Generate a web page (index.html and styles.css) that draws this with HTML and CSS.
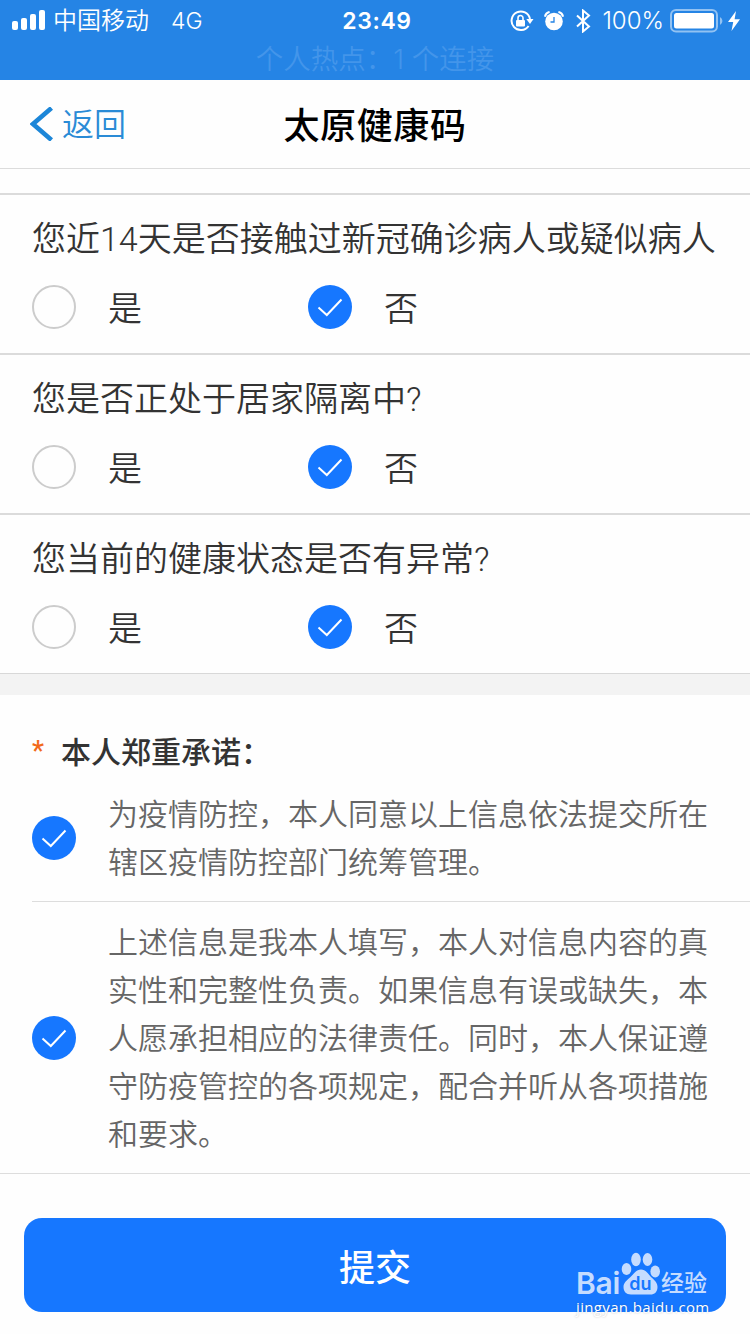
FILE: index.html
```
<!DOCTYPE html>
<html lang="zh-CN">
<head>
    <meta charset="UTF-8">
    <meta name="viewport" content="width=device-width, initial-scale=1.0">
    <title>太原健康码</title>
    <link rel="stylesheet" href="styles.css">
</head>
<body>
    <svg class="defs" width="0" height="0">
        <symbol id="tick" viewBox="0 0 44 44">
            <circle cx="22" cy="22" r="22" fill="#1677ff"/>
            <path d="M10.5 22.5l8.3 7.5L33.5 14.5" fill="none" stroke="#fff" stroke-width="2"/>
        </symbol>
    </svg>

    <div class="status-bar">
        <div class="status-row">
            <div class="status-left">
                <svg class="signal" width="34" height="22" viewBox="0 0 34 22" fill="#fff">
                    <rect x="0" y="11" width="6" height="9" rx="2"/>
                    <rect x="9" y="8" width="6" height="12" rx="2"/>
                    <rect x="18" y="4" width="6" height="16" rx="2"/>
                    <rect x="27" y="0" width="6" height="20" rx="2"/>
                </svg>
                <span class="carrier">中国移动</span>
                <span class="network">4G</span>
            </div>
            <div class="clock">23:49</div>
            <div class="status-right">
                <svg class="lock" width="24" height="22" viewBox="0 0 24 22" fill="none" stroke="#fff">
                    <path d="M18.6 16A9.3 9.3 0 1 1 20 9" stroke-width="2"/>
                    <path d="M16.3 9h7.2L20 14z" fill="#fff" stroke="none"/>
                    <rect x="6" y="10" width="9" height="6.5" rx="1" fill="#fff" stroke="none"/>
                    <path d="M8 10V8a2.5 2.5 0 0 1 5 0v2" stroke-width="1.6"/>
                </svg>
                <svg class="alarm" width="20" height="20" viewBox="0 0 20 20">
                    <circle cx="10" cy="10.5" r="8.8" fill="#fff"/>
                    <path d="M1 5.8A6 6 0 0 1 5.6 1M19 5.8A6 6 0 0 0 14.4 1" fill="none" stroke="#fff" stroke-width="2.2"/>
                    <path d="M10 6v5H6.5" fill="none" stroke="#2584e5" stroke-width="1.3"/>
                </svg>
                <svg class="bluetooth" width="15" height="24" viewBox="0 0 15 24" fill="none" stroke="#fff" stroke-width="2">
                    <path d="M1 6.5l12 11-6 5V1.5l6 5-12 11"/>
                </svg>
                <span class="percent">100%</span>
                <svg class="battery" width="53" height="24" viewBox="0 0 53 24">
                    <rect x="1" y="1" width="46" height="21.5" rx="5" fill="none" stroke="#fff" stroke-opacity=".5" stroke-width="2"/>
                    <rect x="4" y="4" width="40" height="15.5" rx="2.5" fill="#fff"/>
                    <path d="M50 8a4.5 4.5 0 0 1 0 8z" fill="#fff" fill-opacity=".5"/>
                </svg>
                <svg class="bolt" width="12" height="20" viewBox="0 0 12 20" fill="#fff">
                    <path d="M8 0L0 11h5.2L3.5 20 12 8.2H6.6z"/>
                </svg>
            </div>
        </div>
        <div class="hotspot">个人热点：1 个连接</div>
    </div>

    <div class="nav">
        <a class="back">
            <svg width="24" height="34" viewBox="0 0 24 34">
                <path d="M21.5 1L3 17l18.5 16" fill="none" stroke="#1c86d8" stroke-width="4.6"/>
            </svg>
            <span>返回</span>
        </a>
        <h1>太原健康码</h1>
    </div>

    <div class="questions">
        <div class="question">
            <p>您近14天是否接触过新冠确诊病人或疑似病人</p>
            <div class="options">
                <label class="option"><span class="radio"></span><span class="label">是</span></label>
                <label class="option"><svg class="check"><use href="#tick"/></svg><span class="label">否</span></label>
            </div>
        </div>
        <div class="question">
            <p>您是否正处于居家隔离中?</p>
            <div class="options">
                <label class="option"><span class="radio"></span><span class="label">是</span></label>
                <label class="option"><svg class="check"><use href="#tick"/></svg><span class="label">否</span></label>
            </div>
        </div>
        <div class="question">
            <p>您当前的健康状态是否有异常?</p>
            <div class="options">
                <label class="option"><span class="radio"></span><span class="label">是</span></label>
                <label class="option"><svg class="check"><use href="#tick"/></svg><span class="label">否</span></label>
            </div>
        </div>
    </div>

    <div class="promise">
        <h2><span class="star">*</span>本人郑重承诺：</h2>
        <div class="promise-item">
            <svg class="check"><use href="#tick"/></svg>
            <p>为疫情防控，本人同意以上信息依法提交所在<br>辖区疫情防控部门统筹管理。</p>
        </div>
        <div class="promise-item">
            <svg class="check"><use href="#tick"/></svg>
            <p>上述信息是我本人填写，本人对信息内容的真<br>实性和完整性负责。如果信息有误或缺失，本<br>人愿承担相应的法律责任。同时，本人保证遵<br>守防疫管控的各项规定，配合并听从各项措施<br>和要求。</p>
        </div>
    </div>

    <div class="footer">
        <button class="submit">提交</button>
        <div class="watermark">
            <div class="brand">
                <span class="bai">Bai</span>
                <svg width="40" height="44" viewBox="0 0 40 44" fill="#c5dcff">
                    <ellipse cx="5.5" cy="17" rx="4.8" ry="6"/>
                    <ellipse cx="15" cy="7.5" rx="4.8" ry="6.8"/>
                    <ellipse cx="26.5" cy="7.5" rx="4.8" ry="6.5"/>
                    <ellipse cx="34.2" cy="19.5" rx="4.8" ry="6"/>
                    <path d="M20 17.5c5 0 7 4.5 10 7.5 4 3.5 6.5 6 6.5 10 0 5-3 7.5-7 7.5H10c-5 0-7.5-3-7.5-7.5 0-4 3-6.5 7-10 3.500-3 5.500-7.500 10.500-7.500z"/>
                    <text class="du" x="19.500" y="37.500" text-anchor="middle">du</text>
                </svg>
                <span class="jy">经验</span>
            </div>
            <div class="url">jingyan.baidu.com</div>
        </div>
    </div>
</body>
</html>
```

FILE: styles.css
```
* {
    box-sizing: border-box;
}
body {
    margin: 0;
    width: 750px;
    height: 1334px;
    overflow: hidden;
    background-color: #fefefe;
    font-family: Roboto, "Noto Sans CJK SC", sans-serif;
    font-weight: 350;
    color: #333;
}
h1, h2, p {
    margin: 0;
}
svg {
    display: block;
    flex: none;
}
.defs {
    position: absolute;
}

/* status bar */
.status-bar {
    height: 80px;
    background-color: #2584e5;
    color: #fff;
    font-family: Inter, "Noto Sans CJK SC", sans-serif;
}
.status-row {
    display: grid;
    grid-template-columns: 1fr 80px 1fr;
    align-items: center;
    height: 41px;
    padding: 0 10px 0 12px;
    font-size: 24px;
}
.status-left, .status-right {
    display: flex;
    align-items: center;
}
.carrier {
    margin-left: 7px;
    line-height: 30px;
}
.network {
    margin-left: 22px;
    font-size: 23px;
}
.clock {
    font-size: 23px;
    font-weight: 600;
    letter-spacing: 0.6px;
    text-align: center;
    padding-left: 2px;
}
.status-right {
    justify-content: flex-end;
}
.lock {
    margin-right: -1px;
}
.alarm {
    margin-left: 11px;
}
.bluetooth {
    margin-left: 12px;
}
.percent {
    margin: 0 6px 0 11px;
    font-size: 24px;
}
.bolt {
    margin-left: 5px;
}
.hotspot {
    height: 38px;
    line-height: 36px;
    text-align: center;
    font-size: 27.5px;
    color: #4395ea;
}

/* title bar */
.nav {
    display: grid;
    grid-template-columns: 1fr auto 1fr;
    align-items: center;
    height: 89px;
    padding: 0 30px;
    border-bottom: 1px solid #dcdcdc;
}
.back {
    display: flex;
    align-items: center;
    gap: 8px;
    font-size: 32px;
    line-height: 44px;
    color: #2a8bd6;
}
.back span {
    padding-top: 2px;
}
.nav h1 {
    padding-top: 5px;
    font-size: 36px;
    font-weight: 500;
    line-height: 50px;
    letter-spacing: 0.6px;
    color: #000;
}

/* questions */
.questions {
    margin-top: 24px;
    border-bottom: 1px solid #d8d8d8;
}
.question {
    height: 160px;
    padding: 20px 32px 0;
    border-top: 2px solid #dbdbdb;
    font-size: 34px;
}
.question p {
    line-height: 48px;
    white-space: nowrap;
}
.options {
    display: grid;
    grid-template-columns: 276px 1fr;
    margin-top: 22px;
}
.option {
    display: flex;
    align-items: center;
    gap: 32px;
    height: 44px;
}
.label {
    padding-top: 4px;
    line-height: 48px;
}
.radio {
    width: 44px;
    height: 44px;
    border: 2px solid #ccc;
    border-radius: 50%;
}
.check {
    width: 44px;
    height: 44px;
}

/* promise */
.promise {
    border-top: 21px solid #f3f3f3;
    border-bottom: 1px solid #ddd;
    padding-top: 35px;
}
.promise h2 {
    display: flex;
    height: 44px;
    line-height: 46px;
    padding-left: 32px;
    font-size: 30px;
    font-weight: 500;
}
.star {
    width: 29px;
    line-height: 42px;
    font-size: 27px;
    color: #f26a1b;
}
.promise-item {
    display: flex;
    align-items: center;
    gap: 32px;
    margin-left: 32px;
    padding: 16px 0 15px;
    border-bottom: 1px solid #ddd;
}
.promise-item:last-child {
    border-bottom: none;
}
.promise-item p {
    padding-top: 1px;
    margin-bottom: -1px;
    font-size: 30px;
    line-height: 48px;
    color: #666;
    white-space: nowrap;
}

/* submit */
.footer {
    position: relative;
    padding: 44px 24px 22px;
}
.submit {
    display: block;
    width: 100%;
    height: 94px;
    border: none;
    border-radius: 18px;
    background-color: #1677ff;
    color: #fff;
    font-family: "Noto Sans CJK SC", sans-serif;
    font-size: 36px;
    font-weight: 500;
}
.watermark {
    position: absolute;
    left: 576px;
    top: 80px;
    width: 136px;
    color: #c5dcff;
}
.brand {
    display: flex;
    height: 42px;
    align-items: flex-end;
}
.bai {
    width: 45px;
    font-family: Inter, sans-serif;
    font-size: 30px;
    font-weight: 600;
    line-height: 26px;
    letter-spacing: -0.3px;
}
.du {
    font-family: Inter, sans-serif;
    font-size: 18px;
    font-weight: 600;
    fill: #1677ff;
}
.jy {
    font-size: 23px;
    font-weight: 500;
    line-height: 24px;
}
.url {
    margin-top: 2px;
    font-family: "Open Sans", sans-serif;
    font-size: 15px;
    font-weight: 400;
    line-height: 18px;
    color: #fff;
    letter-spacing: 0.35px;
    text-shadow: 0 0 2px rgba(0, 0, 0, 0.25);
}
```
